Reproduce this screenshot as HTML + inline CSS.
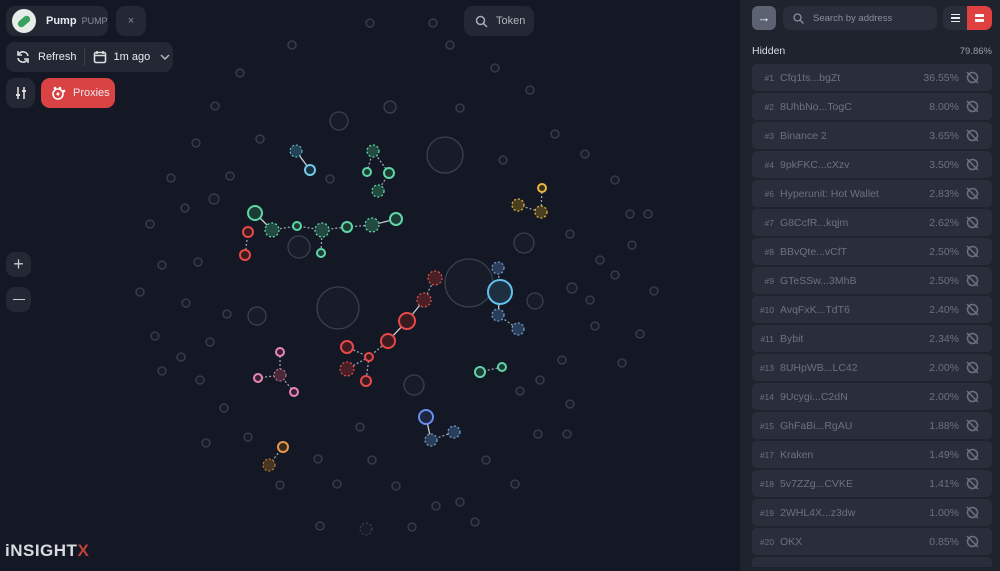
<!DOCTYPE html>
<html style="width:1000px;height:571px;overflow:hidden"><head><meta charset="utf-8"><style>
*{margin:0;padding:0;box-sizing:border-box}
body{width:1000px;height:571px;overflow:hidden;background:#131824;font-family:"Liberation Sans",sans-serif;position:relative}
.pill{position:absolute;background:#232834;border-radius:9px;display:flex;align-items:center;color:#e8eaee;font-size:11px}
#side{position:absolute;left:740px;top:0;width:260px;height:571px;background:#1f232e;overflow:hidden}
.row{position:absolute;left:12px;width:240px;height:27px;background:#2a2e3a;border-radius:5px;color:#6c7180;font-size:10.5px;display:flex;align-items:center}
.row .n{width:28px;text-align:right;padding-right:6px;font-size:8.5px}
.row .p{position:absolute;right:33px}
.row svg{position:absolute;right:12px;top:6px}
</style></head><body>
<svg width="740" height="571" style="position:absolute;left:0;top:0">
<g fill="#171c28" stroke="#3a404d" stroke-width="1.3">
<circle cx="370" cy="23" r="4"/><circle cx="433" cy="23" r="4"/><circle cx="292" cy="45" r="4"/><circle cx="450" cy="45" r="4"/><circle cx="495" cy="68" r="4"/><circle cx="240" cy="73" r="4"/><circle cx="530" cy="90" r="4"/><circle cx="215" cy="106" r="4"/><circle cx="390" cy="107" r="6"/><circle cx="460" cy="108" r="4"/><circle cx="196" cy="143" r="4"/><circle cx="260" cy="139" r="4"/><circle cx="503" cy="160" r="4"/><circle cx="555" cy="134" r="4"/><circle cx="585" cy="154" r="4"/><circle cx="171" cy="178" r="4"/><circle cx="230" cy="176" r="4"/><circle cx="330" cy="179" r="4"/><circle cx="615" cy="180" r="4"/><circle cx="185" cy="208" r="4"/><circle cx="214" cy="199" r="5"/><circle cx="150" cy="224" r="4"/><circle cx="630" cy="214" r="4"/><circle cx="648" cy="214" r="4"/><circle cx="198" cy="262" r="4"/><circle cx="162" cy="265" r="4"/><circle cx="570" cy="234" r="4"/><circle cx="600" cy="260" r="4"/><circle cx="632" cy="245" r="4"/><circle cx="140" cy="292" r="4"/><circle cx="186" cy="303" r="4"/><circle cx="615" cy="275" r="4"/><circle cx="654" cy="291" r="4"/><circle cx="572" cy="288" r="5"/><circle cx="227" cy="314" r="4"/><circle cx="155" cy="336" r="4"/><circle cx="595" cy="326" r="4"/><circle cx="640" cy="334" r="4"/><circle cx="210" cy="342" r="4"/><circle cx="181" cy="357" r="4"/><circle cx="562" cy="360" r="4"/><circle cx="622" cy="363" r="4"/><circle cx="540" cy="380" r="4"/><circle cx="200" cy="380" r="4"/><circle cx="224" cy="408" r="4"/><circle cx="520" cy="391" r="4"/><circle cx="162" cy="371" r="4"/><circle cx="570" cy="404" r="4"/><circle cx="248" cy="437" r="4"/><circle cx="206" cy="443" r="4"/><circle cx="318" cy="459" r="4"/><circle cx="372" cy="460" r="4"/><circle cx="486" cy="460" r="4"/><circle cx="538" cy="434" r="4"/><circle cx="567" cy="434" r="4"/><circle cx="515" cy="484" r="4"/><circle cx="280" cy="485" r="4"/><circle cx="337" cy="484" r="4"/><circle cx="460" cy="502" r="4"/><circle cx="396" cy="486" r="4"/><circle cx="412" cy="527" r="4"/><circle cx="475" cy="522" r="4"/><circle cx="320" cy="526" r="4"/><circle cx="360" cy="427" r="4"/><circle cx="436" cy="506" r="4"/><circle cx="590" cy="300" r="4"/>
<circle cx="445" cy="155" r="18"/><circle cx="339" cy="121" r="9"/><circle cx="299" cy="247" r="11"/><circle cx="338" cy="308" r="21"/><circle cx="469" cy="283" r="24"/><circle cx="524" cy="243" r="10"/><circle cx="535" cy="301" r="8"/><circle cx="257" cy="316" r="9"/><circle cx="414" cy="385" r="10"/>
<circle cx="366" cy="529" r="6" stroke-dasharray="2 2"/>
</g>
<g stroke-dasharray="2 2" stroke-width="1.3" fill="none" stroke="#9aa3b0">
<path d="M272 230L297 226L322 230L347 227L372 225M322 230L321 253M248 232L245 255M373 151L367 172M373 151L389 173M389 173L378 191M435 278L424 300M388 341L369 357L347 347M369 357L347 369M369 357L366 381M498 268L500 292M498 315L518 329M480 372L502 367M518 205L541 212M542 188L541 212M280 352L280 375L258 378M280 375L294 392M431 440L454 432M283 447L269 465"/>
</g>
<g stroke="#c8ccd4" stroke-width="1.3"><path d="M255 213L272 230M372 225L396 219M296 151L310 170M424 300L407 321L388 341M500 292L498 315M426 417L431 440"/></g>
<g stroke-width="2" fill="#1d3a35" stroke="#5ed6a6"><circle cx="255" cy="213" r="7"/><circle cx="297" cy="226" r="4"/><circle cx="347" cy="227" r="5"/><circle cx="396" cy="219" r="6"/><circle cx="321" cy="253" r="4"/><circle cx="367" cy="172" r="4"/><circle cx="389" cy="173" r="5"/><circle cx="480" cy="372" r="5"/><circle cx="502" cy="367" r="4"/></g>
<g stroke-width="1.3" fill="#234a40" stroke="#5ed6a6" stroke-dasharray="2 2"><circle cx="272" cy="230" r="7"/><circle cx="322" cy="230" r="7"/><circle cx="372" cy="225" r="7"/><circle cx="373" cy="151" r="6"/><circle cx="378" cy="191" r="6"/></g>
<circle cx="296" cy="151" r="6" fill="#244456" stroke="#6fc9e8" stroke-dasharray="2 2"/><circle cx="310" cy="170" r="5" fill="#1c2f3c" stroke="#6fc9e8" stroke-width="2"/>
<g stroke-width="2" fill="#3a1c20" stroke="#e84848"><circle cx="248" cy="232" r="5"/><circle cx="245" cy="255" r="5"/><circle cx="407" cy="321" r="8"/><circle cx="388" cy="341" r="7"/><circle cx="347" cy="347" r="6"/><circle cx="369" cy="357" r="4"/><circle cx="366" cy="381" r="5"/></g>
<g stroke-width="1.3" fill="#4a2026" stroke="#d85050" stroke-dasharray="2 2"><circle cx="435" cy="278" r="7"/><circle cx="424" cy="300" r="7"/><circle cx="347" cy="369" r="7"/></g>
<g stroke-width="1.3" fill="#2a3e5a" stroke="#6e9ed0" stroke-dasharray="2 2"><circle cx="498" cy="268" r="6"/><circle cx="498" cy="315" r="6"/><circle cx="518" cy="329" r="6"/><circle cx="431" cy="440" r="6"/><circle cx="454" cy="432" r="6"/></g>
<circle cx="500" cy="292" r="12" fill="#1c3042" stroke="#62c0ee" stroke-width="2"/>
<circle cx="426" cy="417" r="7" fill="#1c2640" stroke="#6a8ef0" stroke-width="2"/>
<g stroke-width="1.3" fill="#4a4020" stroke="#e0b040" stroke-dasharray="2 2"><circle cx="518" cy="205" r="6"/><circle cx="541" cy="212" r="6"/></g><circle cx="542" cy="188" r="4" fill="#3a3020" stroke="#e8b840" stroke-width="2"/>
<g stroke-width="2" fill="#3a2030" stroke="#e888b8"><circle cx="280" cy="352" r="4"/><circle cx="258" cy="378" r="4"/><circle cx="294" cy="392" r="4"/></g><circle cx="280" cy="375" r="6" fill="#4a2a3a" stroke="#d080a8" stroke-dasharray="2 2"/>
<circle cx="283" cy="447" r="5" fill="#3a2a1c" stroke="#e89848" stroke-width="2"/><circle cx="269" cy="465" r="6" fill="#4a3520" stroke="#d08a40" stroke-dasharray="2 2"/>
</svg>
<div class="pill" style="left:6px;top:6px;width:102px;height:30px;padding-left:6px"><div style="width:24px;height:24px;border-radius:12px;background:#e8ece8;position:relative;overflow:hidden"><div style="position:absolute;left:5px;top:9px;width:14px;height:7px;border-radius:4px;background:#3aa060;transform:rotate(-40deg)"></div></div><b style="margin-left:10px;font-size:11px">Pump</b><span style="margin-left:5px;font-size:9px;color:#8a8f9c">PUMP</span></div>
<div class="pill" style="left:116px;top:6px;width:30px;height:30px;justify-content:center;color:#8a8f9c">×</div>
<div class="pill" style="left:464px;top:6px;width:70px;height:30px;padding-left:11px;color:#b0b4bd"><svg width="13" height="13"><circle cx="5.5" cy="5.5" r="4" fill="none" stroke="#aab" stroke-width="1.5"/><path d="M8.5 8.5L12 12" stroke="#aab" stroke-width="1.5"/></svg><span style="margin-left:8px">Token</span></div>
<div class="pill" style="left:6px;top:42px;width:167px;height:30px;padding-left:10px"><svg width="14" height="14"><path d="M12 6A5 5 0 0 0 3 4M2 8A5 5 0 0 0 11 10" fill="none" stroke="#ddd" stroke-width="1.6"/><path d="M2 1v4h4M12 13V9H8" fill="none" stroke="#ddd" stroke-width="1.6"/></svg><span style="margin-left:8px">Refresh</span><div style="width:1px;height:18px;background:#3a3f4b;margin-left:7px"></div><svg width="14" height="14" style="margin-left:8px"><rect x="1.5" y="2.5" width="11" height="10" rx="1.5" fill="none" stroke="#ddd" stroke-width="1.6"/><path d="M1.5 5.5h11M4 1v3M10 1v3" stroke="#ddd" stroke-width="1.6"/></svg><span style="margin-left:7px">1m ago</span><svg width="10" height="6" style="margin-left:10px"><path d="M1 1l4 4 4-4" fill="none" stroke="#bbb" stroke-width="1.4"/></svg></div>
<div class="pill" style="left:6px;top:78px;width:29px;height:30px;justify-content:center"><svg width="12" height="14"><path d="M3 1v12M9 1v12" stroke="#ddd" stroke-width="1.6"/><rect x="1" y="8" width="4" height="2" fill="#ddd"/><rect x="7" y="4" width="4" height="2" fill="#ddd"/></svg></div>
<div class="pill" style="left:41px;top:78px;width:74px;height:30px;background:#d94343;padding-left:10px"><svg width="15" height="15"><circle cx="7" cy="8" r="5" fill="none" stroke="#fff" stroke-width="1.6"/><circle cx="7" cy="8" r="1.5" fill="#fff"/><circle cx="4" cy="2" r="1.3" fill="#fff"/><circle cx="9" cy="2" r="1.3" fill="#fff"/><circle cx="13" cy="5" r="1.3" fill="#fff"/></svg><span style="margin-left:7px">Proxies</span></div>
<div class="pill" style="left:6px;top:252px;width:25px;height:25px;justify-content:center;font-size:18px;color:#ccc">+</div>
<div class="pill" style="left:6px;top:287px;width:25px;height:25px;justify-content:center"><div style="width:12px;height:1.6px;background:#ccc"></div></div>
<div style="position:absolute;left:5px;top:541px;font-size:17px;font-weight:bold;color:#d8dadf;letter-spacing:0.5px">iNSIGHT<span style="color:#c0403a">X</span></div>
<div id="side">
<div style="position:absolute;left:12px;top:6px;width:24px;height:24px;border-radius:6px;background:#5c6272;color:#fff;font-size:13px;text-align:center;line-height:23px">→</div>
<div style="position:absolute;left:43px;top:6px;width:154px;height:24px;border-radius:7px;background:#2a2e3a;color:#8a8f9c;font-size:9.5px;display:flex;align-items:center;padding-left:10px"><svg width="11" height="11"><circle cx="4.5" cy="4.5" r="3.5" fill="none" stroke="#8a8f9c" stroke-width="1.3"/><path d="M7 7l3.5 3.5" stroke="#8a8f9c" stroke-width="1.3"/></svg><span style="margin-left:9px">Search by address</span></div>
<div style="position:absolute;left:203px;top:6px;width:49px;height:24px;border-radius:7px;background:#2a2e3a;overflow:hidden"><div style="position:absolute;left:8px;top:8px;width:9px;height:8px;border-top:1.5px solid #eee;border-bottom:1.5px solid #eee"></div><div style="position:absolute;top:11.3px;width:9px;height:1.5px;background:#eee;left:8px"></div><div style="position:absolute;left:24px;top:0;width:25px;height:24px;background:#e04040"><div style="position:absolute;left:8px;top:8px;width:9px;height:8px;background:#fff;border-radius:1px"></div><div style="position:absolute;left:8px;top:11px;width:9px;height:1.5px;background:#e04040"></div></div></div>
<div style="position:absolute;left:12px;top:45px;font-size:10.5px;color:#d8dae0">Hidden</div>
<div style="position:absolute;right:8px;top:46px;font-size:9.5px;color:#9a9fac">79.86%</div>
<div class="row" style="top:64px"><span class="n">#1</span>Cfq1ts...bgZt<span class="p">36.55%</span><svg width="15" height="15"><circle cx="7.5" cy="7.5" r="5" fill="none" stroke="#6c7180" stroke-width="1.5"/><path d="M2 2l11 11" stroke="#6c7180" stroke-width="1.5"/></svg></div>
<div class="row" style="top:93px"><span class="n">#2</span>8UhbNo...TogC<span class="p">8.00%</span><svg width="15" height="15"><circle cx="7.5" cy="7.5" r="5" fill="none" stroke="#6c7180" stroke-width="1.5"/><path d="M2 2l11 11" stroke="#6c7180" stroke-width="1.5"/></svg></div>
<div class="row" style="top:122px"><span class="n">#3</span>Binance 2<span class="p">3.65%</span><svg width="15" height="15"><circle cx="7.5" cy="7.5" r="5" fill="none" stroke="#6c7180" stroke-width="1.5"/><path d="M2 2l11 11" stroke="#6c7180" stroke-width="1.5"/></svg></div>
<div class="row" style="top:151px"><span class="n">#4</span>9pkFKC...cXzv<span class="p">3.50%</span><svg width="15" height="15"><circle cx="7.5" cy="7.5" r="5" fill="none" stroke="#6c7180" stroke-width="1.5"/><path d="M2 2l11 11" stroke="#6c7180" stroke-width="1.5"/></svg></div>
<div class="row" style="top:180px"><span class="n">#6</span>Hyperunit: Hot Wallet<span class="p">2.83%</span><svg width="15" height="15"><circle cx="7.5" cy="7.5" r="5" fill="none" stroke="#6c7180" stroke-width="1.5"/><path d="M2 2l11 11" stroke="#6c7180" stroke-width="1.5"/></svg></div>
<div class="row" style="top:209px"><span class="n">#7</span>G8CcfR...kqjm<span class="p">2.62%</span><svg width="15" height="15"><circle cx="7.5" cy="7.5" r="5" fill="none" stroke="#6c7180" stroke-width="1.5"/><path d="M2 2l11 11" stroke="#6c7180" stroke-width="1.5"/></svg></div>
<div class="row" style="top:238px"><span class="n">#8</span>BBvQte...vCfT<span class="p">2.50%</span><svg width="15" height="15"><circle cx="7.5" cy="7.5" r="5" fill="none" stroke="#6c7180" stroke-width="1.5"/><path d="M2 2l11 11" stroke="#6c7180" stroke-width="1.5"/></svg></div>
<div class="row" style="top:267px"><span class="n">#9</span>GTeSSw...3MhB<span class="p">2.50%</span><svg width="15" height="15"><circle cx="7.5" cy="7.5" r="5" fill="none" stroke="#6c7180" stroke-width="1.5"/><path d="M2 2l11 11" stroke="#6c7180" stroke-width="1.5"/></svg></div>
<div class="row" style="top:296px"><span class="n">#10</span>AvqFxK...TdT6<span class="p">2.40%</span><svg width="15" height="15"><circle cx="7.5" cy="7.5" r="5" fill="none" stroke="#6c7180" stroke-width="1.5"/><path d="M2 2l11 11" stroke="#6c7180" stroke-width="1.5"/></svg></div>
<div class="row" style="top:325px"><span class="n">#11</span>Bybit<span class="p">2.34%</span><svg width="15" height="15"><circle cx="7.5" cy="7.5" r="5" fill="none" stroke="#6c7180" stroke-width="1.5"/><path d="M2 2l11 11" stroke="#6c7180" stroke-width="1.5"/></svg></div>
<div class="row" style="top:354px"><span class="n">#13</span>8UHpWB...LC42<span class="p">2.00%</span><svg width="15" height="15"><circle cx="7.5" cy="7.5" r="5" fill="none" stroke="#6c7180" stroke-width="1.5"/><path d="M2 2l11 11" stroke="#6c7180" stroke-width="1.5"/></svg></div>
<div class="row" style="top:383px"><span class="n">#14</span>9Ucygi...C2dN<span class="p">2.00%</span><svg width="15" height="15"><circle cx="7.5" cy="7.5" r="5" fill="none" stroke="#6c7180" stroke-width="1.5"/><path d="M2 2l11 11" stroke="#6c7180" stroke-width="1.5"/></svg></div>
<div class="row" style="top:412px"><span class="n">#15</span>GhFaBi...RgAU<span class="p">1.88%</span><svg width="15" height="15"><circle cx="7.5" cy="7.5" r="5" fill="none" stroke="#6c7180" stroke-width="1.5"/><path d="M2 2l11 11" stroke="#6c7180" stroke-width="1.5"/></svg></div>
<div class="row" style="top:441px"><span class="n">#17</span>Kraken<span class="p">1.49%</span><svg width="15" height="15"><circle cx="7.5" cy="7.5" r="5" fill="none" stroke="#6c7180" stroke-width="1.5"/><path d="M2 2l11 11" stroke="#6c7180" stroke-width="1.5"/></svg></div>
<div class="row" style="top:470px"><span class="n">#18</span>5v7ZZg...CVKE<span class="p">1.41%</span><svg width="15" height="15"><circle cx="7.5" cy="7.5" r="5" fill="none" stroke="#6c7180" stroke-width="1.5"/><path d="M2 2l11 11" stroke="#6c7180" stroke-width="1.5"/></svg></div>
<div class="row" style="top:499px"><span class="n">#19</span>2WHL4X...z3dw<span class="p">1.00%</span><svg width="15" height="15"><circle cx="7.5" cy="7.5" r="5" fill="none" stroke="#6c7180" stroke-width="1.5"/><path d="M2 2l11 11" stroke="#6c7180" stroke-width="1.5"/></svg></div>
<div class="row" style="top:528px"><span class="n">#20</span>OKX<span class="p">0.85%</span><svg width="15" height="15"><circle cx="7.5" cy="7.5" r="5" fill="none" stroke="#6c7180" stroke-width="1.5"/><path d="M2 2l11 11" stroke="#6c7180" stroke-width="1.5"/></svg></div>
<div class="row" style="top:557px;height:10px;border-radius:5px 5px 0 0"></div>
</div>
</body></html>
